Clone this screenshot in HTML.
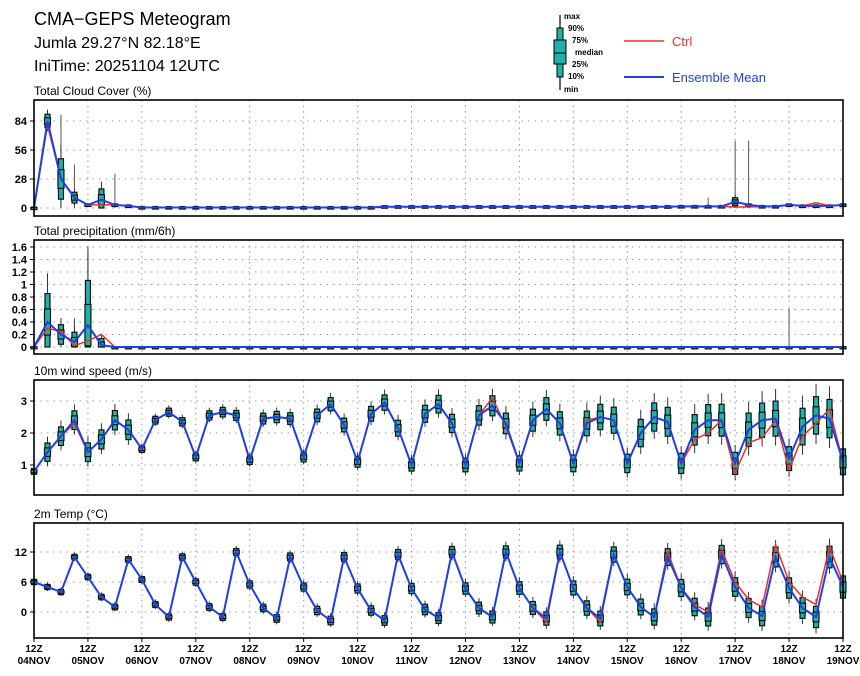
<!DOCTYPE html>
<html><head><meta charset="utf-8"><style>
html,body{margin:0;padding:0;background:#fff;width:860px;height:676px;overflow:hidden}
svg{display:block;font-family:"Liberation Sans",sans-serif}
</style></head><body>
<svg id="s" width="860" height="676" xmlns="http://www.w3.org/2000/svg">
<text x="34" y="25" font-size="18" fill="#000">CMA−GEPS Meteogram</text>
<text x="34" y="48" font-size="16" fill="#000">Jumla 29.27°N 82.18°E</text>
<text x="34" y="71" font-size="16" fill="#000">IniTime: 20251104 12UTC</text>
<line x1="560" y1="15" x2="560" y2="90" stroke="#000" stroke-width="1.2"/>
<rect x="557" y="28" width="6" height="49" fill="#20b2aa" stroke="#000" stroke-width="1"/>
<rect x="554" y="40" width="12" height="24" fill="#20b2aa" stroke="#000" stroke-width="1"/>
<line x1="554" y1="53" x2="566" y2="53" stroke="#000"/>
<g font-size="8" font-weight="bold" fill="#000">
<text x="564" y="19">max</text><text x="568" y="31">90%</text><text x="572" y="43">75%</text>
<text x="575" y="55">median</text><text x="572" y="67">25%</text><text x="568" y="79">10%</text><text x="564" y="92">min</text></g>
<line x1="624" y1="41" x2="664" y2="41" stroke="#e8302c" stroke-width="1.5"/>
<text x="672" y="46" font-size="13" fill="#e8302c">Ctrl</text>
<line x1="624" y1="77" x2="664" y2="77" stroke="#2040e0" stroke-width="2"/>
<text x="672" y="82" font-size="13" fill="#2040e0">Ensemble Mean</text>
<g id="g"></g>
</svg>
<script>
var NS="http://www.w3.org/2000/svg",G=document.getElementById("g");
function el(t,a,txt){var e=document.createElementNS(NS,t);for(var k in a)e.setAttribute(k,a[k]);if(txt!==undefined)e.textContent=txt;G.appendChild(e);return e;}
var X0=34,X1=843,dx=(X1-X0)/60;function X(i){return X0+dx*i;}
function panel(o){
 el("text",{x:34,y:o.top-5,"font-size":12},o.title);
 for(var d=1;d<15;d++){var x=X0+d*(X1-X0)/15;el("line",{x1:x,y1:o.top,x2:x,y2:o.bot,stroke:"#999","stroke-dasharray":"1.5,4"});}
 o.ticks.forEach(function(t){var y=o.y(t[0]);el("line",{x1:X0,y1:y,x2:X1,y2:y,stroke:"#999","stroke-dasharray":"1.5,5"});el("line",{x1:X0-4,y1:y,x2:X0,y2:y,stroke:"#000"});el("text",{x:X0-7,y:y+4,"font-size":11,"font-weight":"bold","text-anchor":"end"},t[1]);});
 (o.extra||[]).forEach(function(w){el("line",{x1:X(w[0]),y1:o.y(w[1]),x2:X(w[0]),y2:o.y(0),stroke:"#555","stroke-width":1});});
 for(var i=0;i<o.m.length;i++){var v=o.m[i],s=o.sp(i,v);if(s===null)continue;var x=X(i);
  var lo=o.lo!==undefined?Math.max(o.lo,v-s*2):v-s*2;
  el("line",{x1:x,y1:o.y(v+s*2.2),x2:x,y2:o.y(lo),stroke:"#333","stroke-width":1});
  var a=o.y(v+s*1.3),b=o.y(o.lo!==undefined?Math.max(o.lo,v-s*1.3):v-s*1.3);el("rect",{x:x-2.5,y:a,width:5,height:Math.max(b-a,2),fill:"#20b2aa",stroke:"#111","stroke-width":1.2});
  var c=o.y(v+s*0.6),e=o.y(o.lo!==undefined?Math.max(o.lo,v-s*0.6):v-s*0.6);el("rect",{x:x-3,y:c,width:6,height:Math.max(e-c,2),fill:"#20b2aa",stroke:"#111","stroke-width":1.2});
 }
 function pl(arr,col,w){el("polyline",{points:arr.map(function(v,i){return X(i).toFixed(1)+","+o.y(v).toFixed(1)}).join(" "),fill:"none",stroke:col,"stroke-width":w});}
 pl(o.c,"#e8302c",1.5);pl(o.m,"#2040e0",2);
 el("rect",{x:X0,y:o.top,width:X1-X0,height:o.bot-o.top,fill:"none",stroke:"#000","stroke-width":1.6});
}
function fill(a,n,v){while(a.length<n)a.push(typeof v=="function"?v(a.length):v);return a;}
var cm=fill([0,84,28,10,3,8,3,2],61,function(i){return i<48?0.5+(i>25?0.8:0):1.5});cm[52]=6;cm[53]=3;cm[56]=3;cm[57]=2;cm[58]=2;cm[59]=2;cm[60]=3;
var cc=cm.slice();cc[1]=80;cc[5]=3;cc[52]=1;cc[53]=1;cc[58]=5;cc[59]=2;cc[60]=3;
panel({title:"Total Cloud Cover (%)",top:100,bot:216,y:function(v){return 208-v*1.036;},ticks:[[0,"0"],[28,"28"],[56,"56"],[84,"84"]],m:cm,c:cc,lo:0,
 extra:[[2,90],[3,42],[6,33],[50,10],[52,65],[53,65]],
 sp:function(i,v){if(i==1)return 5;if(i==2)return 15;if(i==3)return 4;if(i==5)return 8;if(i==52)return 3;return 0.7;}});
var pm=fill([0,0.4,0.2,0.08,0.35,0.03],61,0),pc=fill([0,0.3,0.25,0.02,0.1,0.2],61,0);
panel({title:"Total precipitation (mm/6h)",top:240,bot:354,y:function(v){return 347-v*62.5;},ticks:[[0,"0"],[0.2,"0.2"],[0.4,"0.4"],[0.6,"0.6"],[0.8,"0.8"],[1,"1"],[1.2,"1.2"],[1.4,"1.4"],[1.6,"1.6"]],m:pm,c:pc,lo:0,
 extra:[[1,1.18],[3,0.46],[4,1.6],[56,0.62]],
 sp:function(i,v){return [0,0.35,0.12,0.12,0.55,0.08][i]||0.004;}});
var wm=[0.8,1.4,1.9,2.4,1.4,1.8,2.4,2.1,1.5,2.4,2.65,2.35,1.25,2.55,2.65,2.55,1.15,2.45,2.5,2.45,1.25,2.55,2.9,2.25,1.1,2.6,2.95,2.15,1.0,2.6,2.9,2.3,1.0,2.55,2.85,2.3,1.05,2.4,2.75,2.3,1.05,2.3,2.5,2.4,1.05,2.0,2.5,2.35,1.05,2.1,2.4,2.4,1.05,2.1,2.4,2.45,1.2,2.2,2.55,2.45,1.1];
var wc=wm.slice();wc[3]=2.3;wc[34]=3.1;wc[35]=2.2;wc[41]=2.4;wc[49]=1.8;wc[50]=2.0;wc[51]=2.4;wc[52]=0.75;wc[53]=1.7;wc[54]=1.85;wc[55]=2.4;wc[56]=0.85;wc[57]=1.9;wc[58]=2.3;wc[59]=2.75;
panel({title:"10m wind speed (m/s)",top:380,bot:495,y:function(v){return 497-v*32;},ticks:[[1,"1"],[2,"2"],[3,"3"]],m:wm,c:wc,
 sp:function(i,v){return 0.07+0.4*Math.pow(i/60,1.5)*(i%4==0?0.6:1)+(i<8&&i>0?0.15:0);}});
var tm=[6,5,4,11,7,3,1,10.5,6.5,1.5,-1,11,6,1,-1,12,5.5,0.8,-1.3,11,5,0.3,-1.7,11,4.7,0.3,-1.7,11.5,4.7,0.5,-1.2,12,4.7,0.8,-1,12,4.8,0.8,-1.3,12,4.8,0.8,-1.3,11.5,5,1,-1,11,4.8,1,-1,11.5,5,0.8,-0.8,11,4.8,0.8,-1,11,5];
var tc=tm.slice();tc[38]=-2;tc[42]=-2;tc[47]=12;tc[49]=1.5;tc[50]=0;tc[51]=12.5;tc[52]=6;tc[53]=2.5;tc[54]=1;tc[55]=13.5;tc[56]=6;tc[57]=3;tc[58]=1.5;tc[59]=13;tc[60]=6;
panel({title:"2m Temp (°C)",top:523,bot:638,y:function(v){return 612-v*5;},ticks:[[0,"0"],[6,"6"],[12,"12"]],m:tm,c:tc,
 sp:function(i,v){return 0.4+1.3*Math.pow(i/60,1.6);}});
for(var d=0;d<=15;d++){var x=X0+d*(X1-X0)/15;el("line",{x1:x,y1:638,x2:x,y2:642,stroke:"#000"});
 el("text",{x:x,y:652,"font-size":10,"font-weight":"bold","text-anchor":"middle"},"12Z");
 el("text",{x:x,y:664,"font-size":10,"font-weight":"bold","text-anchor":"middle"},(d+4<10?"0":"")+(d+4)+"NOV");}
</script>
</body></html>
